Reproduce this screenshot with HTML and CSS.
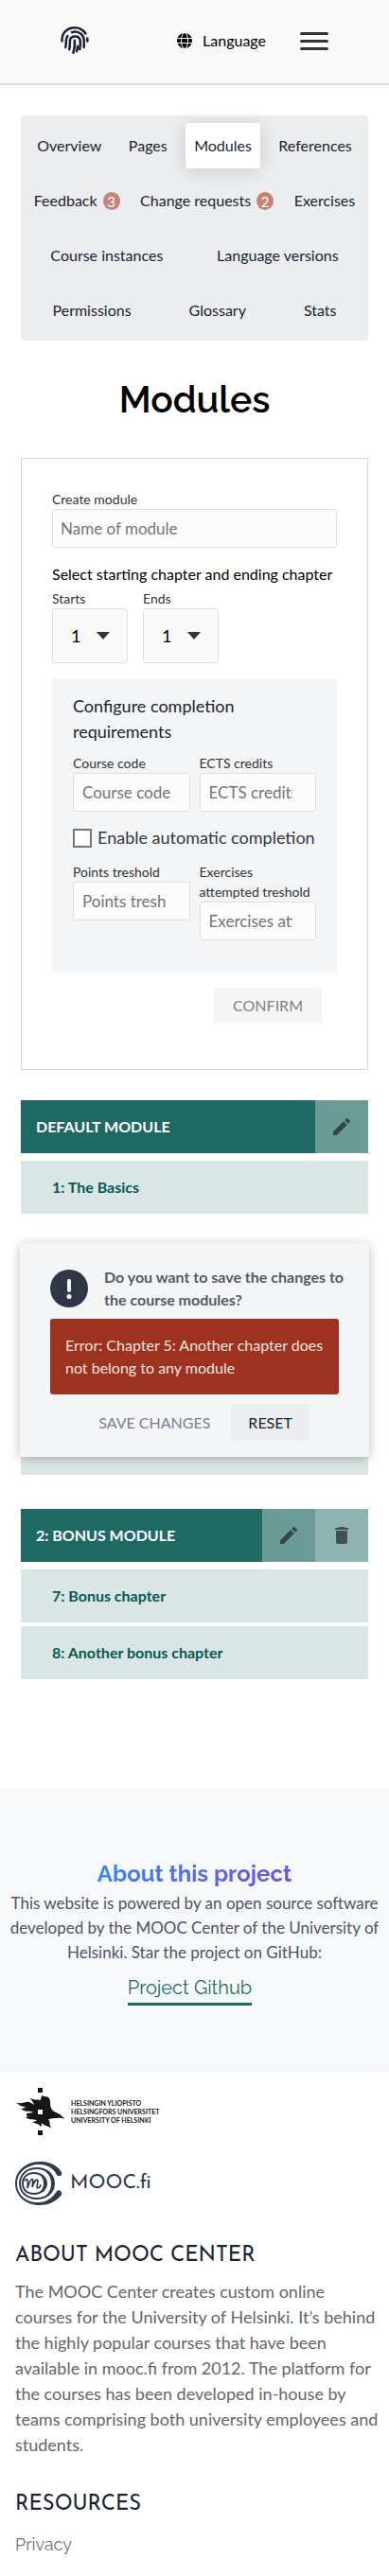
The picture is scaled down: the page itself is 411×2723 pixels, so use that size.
FILE: index.html
```html
<!DOCTYPE html>
<html lang="en">
<head>
<meta charset="utf-8">
<meta name="viewport" content="width=device-width, initial-scale=1">
<title>Modules</title>
<link rel="stylesheet" href="styles.css">
</head>
<body>
<header class="topbar">
  <a class="brand" href="#" aria-label="Home">
    <svg width="30" height="30" viewBox="0 0 30 30" fill="none" stroke="#1a2333" stroke-width="2.5" stroke-linecap="round">
      <path d="M1.500 15.500C1 7 7 1.300 15 1.300c5 0 9 2.500 11.500 6.200"/>
      <path d="M28.300 12.500v3"/>
      <path d="M5.300 22c.8-3 .3-5 .6-8 .2-1.700.7-2.800 1.500-4"/>
      <path d="M12 6.200c5.500-1.900 12.500 1.300 12.700 8.300v7.500"/>
      <path d="M9.200 24.200c1.200-4 .3-7 .8-10 1.200-5 9.600-5 10.700.4.300 3 .2 6-.400 9.500"/>
      <path d="M14.900 14.800c.2 5-.1 9-1.500 13"/>
      <path d="M18 21c-.1 2-.4 3.700-.9 5.200"/>
    </svg>
  </a>
  <button class="language" type="button">
    <svg width="16" height="16" viewBox="0 0 16 16"><circle cx="8" cy="8" r="8"/><g fill="none" stroke="#f9f9f9" stroke-width="1"><ellipse cx="8" cy="8" rx="3.500" ry="8.500"/><path d="M0 5.500h16M0 10.500h16"/></g></svg>
    Language
  </button>
  <button class="menu" type="button" aria-label="Menu"><span></span><span></span><span></span></button>
</header>

<main class="page">
  <nav class="tabs">
    <div><a href="#">Overview</a><a href="#">Pages</a><a class="active" href="#">Modules</a><a href="#">References</a></div>
    <div><a href="#">Feedback<span class="count">3</span></a><a href="#">Change requests<span class="count">2</span></a><a href="#">Exercises</a></div>
    <div><a href="#">Course instances</a><a href="#">Language versions</a></div>
    <div><a href="#">Permissions</a><a href="#">Glossary</a><a href="#">Stats</a></div>
  </nav>

  <h1 class="title">Modules</h1>

  <form class="card">
    <label class="label" for="name">Create module</label>
    <input class="field" id="name" type="text" placeholder="Name of module">
    <p class="hint">Select starting chapter and ending chapter</p>
    <div class="range">
      <div>
        <label class="label" for="starts">Starts</label>
        <div class="select"><select id="starts"><option>1</option></select><svg width="14" height="8" viewBox="0 0 14 8"><path d="M0 0h14L7 8z" fill="#333"/></svg></div>
      </div>
      <div>
        <label class="label" for="ends">Ends</label>
        <div class="select"><select id="ends"><option>1</option></select><svg width="14" height="8" viewBox="0 0 14 8"><path d="M0 0h14L7 8z" fill="#333"/></svg></div>
      </div>
    </div>
    <fieldset class="completion">
      <h2>Configure completion requirements</h2>
      <div class="pair">
        <div><label class="label" for="code">Course code</label><input class="field" id="code" type="text" placeholder="Course code"></div>
        <div><label class="label" for="ects">ECTS credits</label><input class="field" id="ects" type="number" placeholder="ECTS credits"></div>
      </div>
      <label class="check"><input type="checkbox">Enable automatic completion</label>
      <div class="pair">
        <div><label class="label" for="points">Points treshold</label><input class="field" id="points" type="number" placeholder="Points treshold"></div>
        <div><label class="label" for="attempts">Exercises<br>attempted treshold</label><input class="field" id="attempts" type="number" placeholder="Exercises attempted treshold"></div>
      </div>
    </fieldset>
    <div class="submit"><button class="button" type="submit" disabled>CONFIRM</button></div>
  </form>

  <section class="module">
    <div class="module-head">
      <h2>DEFAULT MODULE</h2>
      <button class="edit" type="button" aria-label="Edit"><svg width="24" height="24" viewBox="0 0 24 24"><path d="M3 17.250V21h3.750L17.810 9.940l-3.750-3.750zM20.710 7.040a1 1 0 0 0 0-1.410l-2.340-2.340a1 1 0 0 0-1.410 0l-1.830 1.830 3.750 3.750z"/></svg></button>
    </div>
    <ul class="chapters"><li>1: The Basics</li></ul>
  </section>

  <section class="module covered">
    <div class="module-head"></div>
    <ul class="chapters"><li></li><li></li><li></li></ul>
    <div class="dialog" role="alertdialog" aria-labelledby="question">
      <div class="question">
        <svg width="40" height="40" viewBox="0 0 40 40"><circle cx="20" cy="20" r="20" fill="#2f3747"/><path d="M20 12v10" stroke="#f4f5f7" stroke-width="4" stroke-linecap="round"/><circle cx="20" cy="28.500" r="2.600" fill="#f4f5f7"/></svg>
        <p id="question">Do you want to save the changes to the course modules?</p>
      </div>
      <p class="error">Error: Chapter 5: Another chapter does not belong to any module</p>
      <div class="actions"><button class="button" type="button" disabled>SAVE CHANGES</button><button class="button reset" type="button">RESET</button></div>
    </div>
  </section>

  <section class="module">
    <div class="module-head">
      <h2>2: BONUS MODULE</h2>
      <button class="edit" type="button" aria-label="Edit"><svg width="24" height="24" viewBox="0 0 24 24"><path d="M3 17.250V21h3.750L17.810 9.940l-3.750-3.750zM20.710 7.040a1 1 0 0 0 0-1.410l-2.340-2.340a1 1 0 0 0-1.410 0l-1.830 1.830 3.750 3.750z"/></svg></button>
      <button class="delete" type="button" aria-label="Delete"><svg width="24" height="24" viewBox="0 0 24 24"><path d="M6 19c0 1.100.900 2 2 2h8c1.100 0 2-.900 2-2V7H6zM19 4h-3.500l-1-1h-5l-1 1H5v2h14z"/></svg></button>
    </div>
    <ul class="chapters"><li>7: Bonus chapter</li><li>8: Another bonus chapter</li></ul>
  </section>
</main>

<section class="about">
  <h2>About this project</h2>
  <p>This website is powered by an open source software developed by the MOOC Center of the University of Helsinki. Star the project on GitHub:</p>
  <a href="#">Project Github</a>
</section>

<footer class="footer">
  <a class="logo helsinki" href="#">
    <svg width="53" height="50" viewBox="0 0 53 50"><path fill="#171717" fill-rule="evenodd" d="M24 0h5v5h-5zM24 45h5v5h-5zM0 15c4 2 8 1 12 0 2-1 5 1 8 3-1-3-2-5-5-7 5 2 8 1 12 2l1-5c3 2 5 0 8 3 2 4 0 8 3 12 2 3 4 2 6 4 3 1 5 3 7 6-4-2-7-1-10-1-3 0-4 1-7 1 2 2 1 5 3 10-4-4-7-2-10-6 0 2 0 3-1 4-3-4-6-3-9-5 2 0 4-1 5-2-5-1-9 0-12-3l3 0c-2 0-2-2-2-4l7-1c-4-3-7 1-13-4 3 0 4-1 5-2-6 0-7-3-11-5zM24 23v5h5v-5z"/></svg>
    <span>HELSINGIN YLIOPISTO<br>HELSINGFORS UNIVERSITET<br>UNIVERSITY OF HELSINKI</span>
  </a>
  <a class="logo mooc" href="#">
    <svg width="50" height="46" viewBox="0 0 50 46" fill="none" stroke="#2f3a4b" stroke-linecap="round"><path fill="#2f3a4b" stroke="none" d="M49 11C42 1 33 0 26 0 11 0 0 10 0 23s11 23 26 23c8 0 17-3 23-11 1-3-2-6-5-4-3 5-8 11-18 12C12 44 2 35 2 23S13 3 26 3c9 0 15 5 18 11 3 3 6 0 5-3z"/><path fill="#2f3a4b" stroke="none" fill-rule="evenodd" d="M23 6c11 0 19 7 19 17s-8 17-19 17S4 33 4 23 12 6 23 6zm0 2C13 8 6 14 6 23s7 15 17 15 15-6 15-15S32 8 23 8z"/><path fill="#2f3a4b" stroke="none" fill-rule="evenodd" d="M20 11c8 0 14 5 14 12s-6 12-14 12S7 30 7 23s5-12 13-12zm0 2c-7 0-11 4-11 10s4 10 11 10 10-4 10-10-3-10-10-10z"/><path stroke-width="1.700" d="M10 20c3-3 4-1 3 8 2-7 5-12 6-8l-1 7c2-6 5-10 6-7 0 3-2 8 0 8 1 0 2-1 3-3"/></svg>
    <span>MOOC.fi</span>
  </a>
  <h2>ABOUT MOOC CENTER</h2>
  <p>The MOOC Center creates custom online<br>courses for the University of Helsinki. It’s behind the highly popular courses that have been available in mooc.fi from 2012. The platform for the courses has been developed in-house by teams comprising both university employees and students.</p>
  <h2>RESOURCES</h2>
  <a class="privacy" href="#">Privacy</a>
</footer>
</body>
</html>
```

FILE: styles.css
```css
* { box-sizing: border-box; margin: 0; padding: 0; }
body { font-family: Lato, sans-serif; font-size: 16px; line-height: 24px; color: #000; background: #fff; }
button, input, select { font-family: inherit; border: 0; }
button { background: none; }
a { color: inherit; text-decoration: none; }
svg { display: block; flex: none; }

.topbar { display: flex; align-items: center; height: 90px; padding: 0 64px 2px; background: #f9f9f9; border-bottom: 2px solid #dedede; }
.brand { margin-right: auto; }
.language { display: flex; align-items: center; gap: 11px; font-size: 16px; line-height: 24px; margin-right: 36px; }
.menu { display: flex; flex-direction: column; gap: 5px; width: 30px; }
.menu span { height: 3px; border-radius: 2px; background: #333; }

.page { padding: 32px 22px 116px; }
.tabs { padding: 3px; border-radius: 4px; background: #ebedee; color: #1a2333; }
.tabs div { display: flex; }
.tabs a { display: flex; flex-grow: 1; align-items: center; justify-content: center; height: 48px; margin: 5px; padding: 0 4px; border-radius: 4px; white-space: nowrap; }
.tabs .active { background: #fff; box-shadow: 0 2px 20px rgba(0, 0, 0, .15); }
.count { width: 18px; height: 19px; margin-left: 6px; border-radius: 50%; background: #c68376; color: #fff; font-size: 15px; line-height: 20px; text-align: center; }
.title { margin: 38px 0; font-family: Raleway, Lato, sans-serif; font-size: 39px; font-weight: 600; line-height: 48px; text-align: center; }

.card { padding: 32px; padding-bottom: 49px; border: 1px solid #d2d4d5; }
.label { display: block; font-size: 14px; line-height: 21px; color: #333; }
.field { display: block; width: 100%; height: 41px; padding: 8px; border: 1px solid #dedede; border-radius: 3px; background: #fcfcfc; font-size: 17px; }
.field::placeholder { color: #757575; }
.hint { margin: 16px 0 3px; }
.range { display: flex; gap: 16px; }
.select { position: relative; width: 80px; }
.select select { display: block; appearance: none; width: 100%; height: 58px; padding: 0 19px; border: 1px solid #dedede; border-radius: 3px; background: #f9f9f9; color: #000; font-size: 18px; }
.select svg { position: absolute; right: 19px; top: 25px; pointer-events: none; }
.completion { margin-top: 16px; padding: 16px 22px 34px; border: 0; background: #f4f5f7; color: #1a2333; }
.completion h2 { margin-bottom: 9px; font-size: 18px; font-weight: 400; line-height: 27px; }
.pair { display: grid; grid-template-columns: 1fr 1fr; gap: 10px; align-items: start; }
.pair .field { padding: 8px 9px; }
.check { display: flex; align-items: center; gap: 6px; margin: 14px -10px 12px 0; font-size: 18px; line-height: 27px; color: #2f3747; white-space: nowrap; }
.check input { appearance: none; width: 20px; height: 20px; border: 2px solid #767676; background: #fff; }
.submit { display: flex; justify-content: flex-end; padding: 16px 16px 0; }
.button { height: 37px; padding: 0 18px; background: #f4f5f7; color: #1a2333; font-size: 16px; line-height: 24px; }
.button:disabled { color: #7b818c; }
.submit .button { padding: 0 20px; }

.module { margin-top: 32px; }
.module + .module { margin-top: 36px; }
.module-head { display: flex; height: 56px; background: #1f6964; color: #fff; }
.module-head h2 { flex: 1; padding: 16px; font-size: 16px; font-weight: 700; line-height: 24px; }
.module-head button { display: grid; place-items: center; width: 56px; }
.module-head .edit { background: #6b9b97; fill: #334743; }
.module-head .delete { background: #8fb3b0; fill: #41514f; }
.chapters { display: grid; gap: 4px; margin-top: 8px; list-style: none; }
.chapters li { height: 56px; padding: 16px 33px; background: #dae6e5; color: #065853; font-weight: 700; }

.covered { position: relative; }
.dialog { position: absolute; top: -5px; left: -1px; right: -1px; padding: 24px 32px 17px; border-radius: 3px; background: #f4f5f7; box-shadow: 0 2px 12px rgba(0, 0, 0, .25); }
.question { display: flex; align-items: center; gap: 17px; margin: 0 -12px 8px 0; color: #535a66; font-weight: 700; }
.error { padding: 16px 0 16px 16px; border-radius: 3px; min-height: 80px; background: #9d3220; color: #f4e3df; }
.actions { display: flex; justify-content: flex-end; gap: 4px; padding: 10px 31px 0 0; }
.actions .button { height: 39px; }
.actions .reset { background: #ebedee; }

.about { display: flex; flex-direction: column; align-items: center; padding: 74px 0 71px; background: #f7f8fa; text-align: center; }
.about h2 { margin-bottom: 2px; font-family: Raleway, Lato, sans-serif; font-size: 24px; font-weight: 700; line-height: 32px; color: transparent; background: linear-gradient(90deg, #3b82f6, #6d55df); background-clip: text; -webkit-background-clip: text; }
.about p { color: #4b5563; font-size: 17px; line-height: 26px; }
.about a { margin: 8px 10px 0 0; border-bottom: 3px solid #1f6964; color: #1f6964; font-family: Raleway, Lato, sans-serif; font-size: 20px; line-height: 32px; }

.footer { padding: 16px 16px 20px; }
.logo { display: flex; align-items: center; }
.helsinki { gap: 6px; color: #171717; font-size: 7px; font-weight: 700; line-height: 9px; }
.mooc { gap: 8px; margin: 28px 0 38px; color: #2f3a4b; font-family: "Josefin Sans", Lato, sans-serif; font-size: 21px; font-weight: 400; }
.footer h2 { color: #1a2333; font-family: "Josefin Sans", Lato, sans-serif; font-size: 22px; font-weight: 400; line-height: 32px; }
.footer p { margin: 8px -12px 34px 0; color: #666; font-size: 18px; line-height: 27px; }
.privacy { display: block; margin-top: 12px; color: #6b7080; font-family: Raleway, Lato, sans-serif; font-size: 18px; line-height: 27px; }
```
